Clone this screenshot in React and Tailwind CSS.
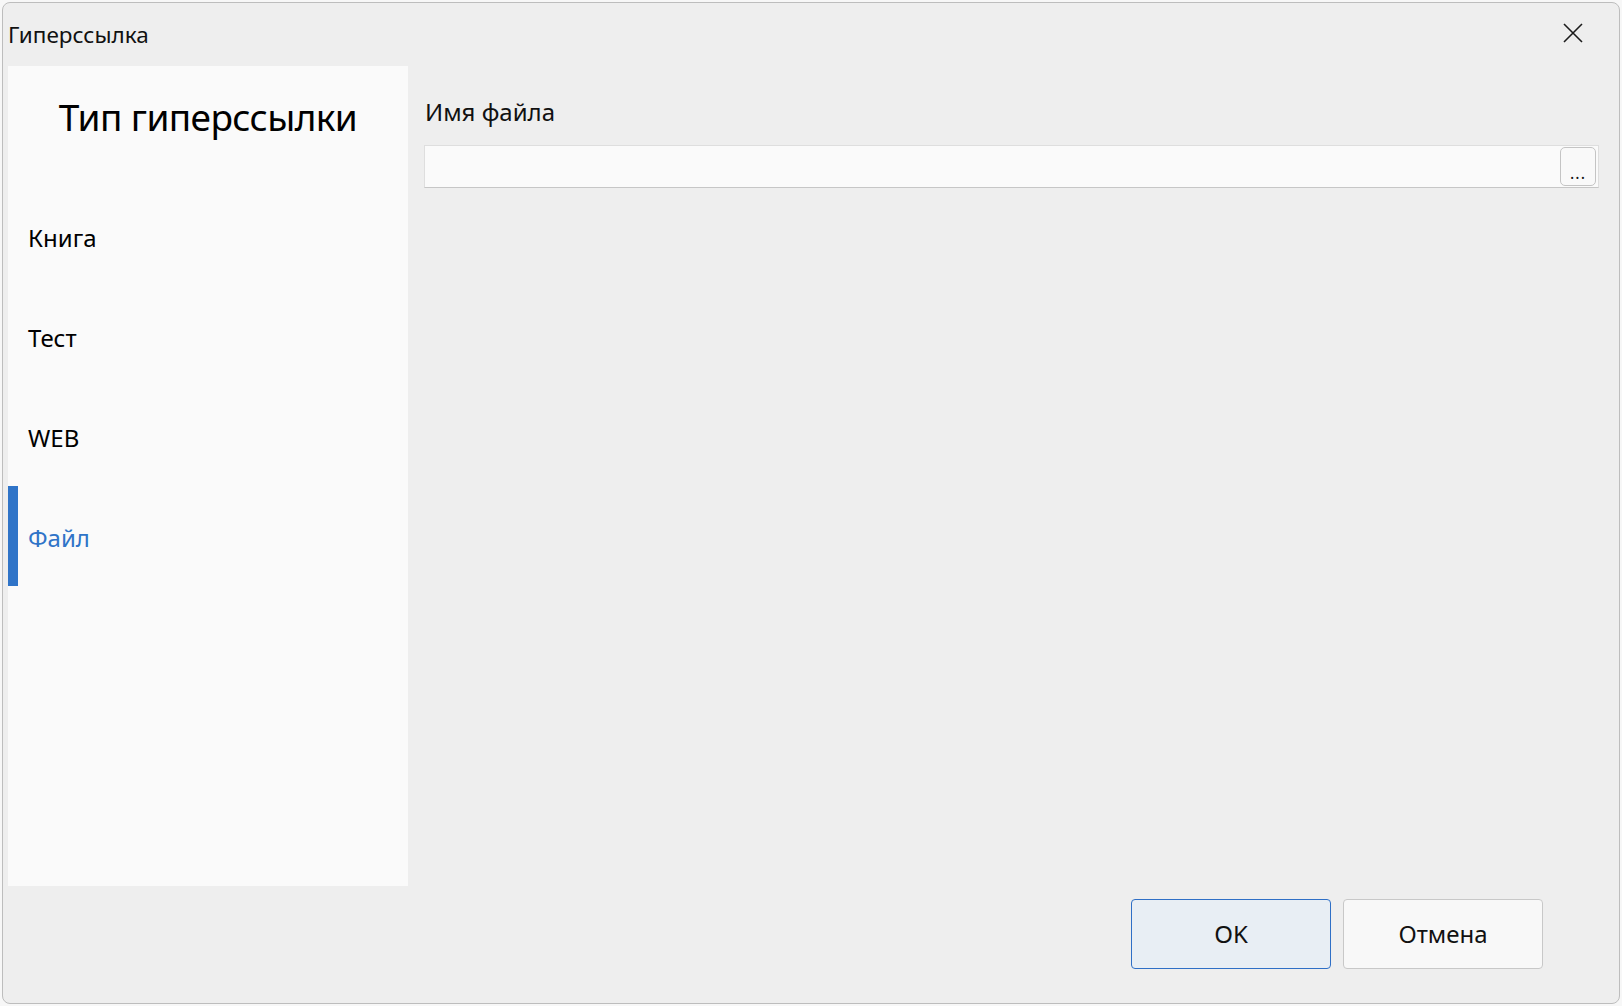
import React from 'react'

const items = ['Книга', 'Тест', 'WEB', 'Файл']

export default function App() {
  const active = 'Файл'

  return (
    <div className="w-[1622px] h-[1006px] bg-[#f7f7f7] pt-[2px] pl-[2px] font-['Noto_Sans','Open_Sans',sans-serif] text-[#111]">
      <div className="w-[1618px] h-[1002px] bg-[#eeeeee] border border-[#bdbdbd] rounded-[8px] flex flex-col overflow-hidden">
        {/* заголовок окна */}
        <div className="h-[63px] flex items-center justify-between pl-[5px] pr-[36px]">
          <span className="text-[22.5px] pt-[1px]">Гиперссылка</span>
          <svg width="20" height="20" viewBox="0 0 20 20" className="mt-[-3px]">
            <path d="M1 1 L19 19 M19 1 L1 19" stroke="#1c1c1c" strokeWidth="1.6" fill="none" />
          </svg>
        </div>

        <div className="flex-1 flex items-start pl-[5px]">
          {/* боковая панель */}
          <div className="w-[400px] h-[820px] bg-[#fafafa] flex flex-col">
            <div className="h-[120px] pt-[31px] text-center text-[37px] leading-[40px] tracking-[-0.6px] text-black">
              Тип гиперссылки
            </div>
            {items.map((it) => (
              <div
                key={it}
                className={
                  it === active
                    ? 'h-[100px] flex items-center pt-[3px] border-l-[10px] border-[#2f74c8] pl-[10px] text-[24px] text-[#2f74c8]'
                    : 'h-[100px] flex items-center pt-[3px] pl-[20px] text-[24px] text-black'
                }
              >
                {it}
              </div>
            ))}
          </div>

          {/* содержимое */}
          <div className="flex-1 self-stretch flex flex-col pl-[16px] pr-[20px]">
            <div className="pt-[28px] pl-[1px] text-[24px]">Имя файла</div>
            <div className="mt-[15px] h-[43px] flex items-center justify-end bg-[#fafafa] border border-[#dedede] border-b-[#c6c6c6] pr-[2px]">
              <button className="w-[36px] h-[39px] flex items-end justify-center pb-[4px] rounded-[5px] border border-[#c4c4c4] bg-[#f9f9f9] text-[16px] leading-none tracking-[1px]">
                ...
              </button>
            </div>
            <div className="flex-1" />
            <div className="flex justify-end gap-[12px] mr-[56px] mb-[34px]">
              <button className="w-[200px] h-[70px] rounded-[4px] border border-[#2f6fc6] bg-[#e8eef4] text-[24px]">
                OK
              </button>
              <button className="w-[200px] h-[70px] rounded-[4px] border border-[#c8c8c8] bg-[#f8f8f8] text-[24px]">
                Отмена
              </button>
            </div>
          </div>
        </div>
      </div>
    </div>
  )
}
